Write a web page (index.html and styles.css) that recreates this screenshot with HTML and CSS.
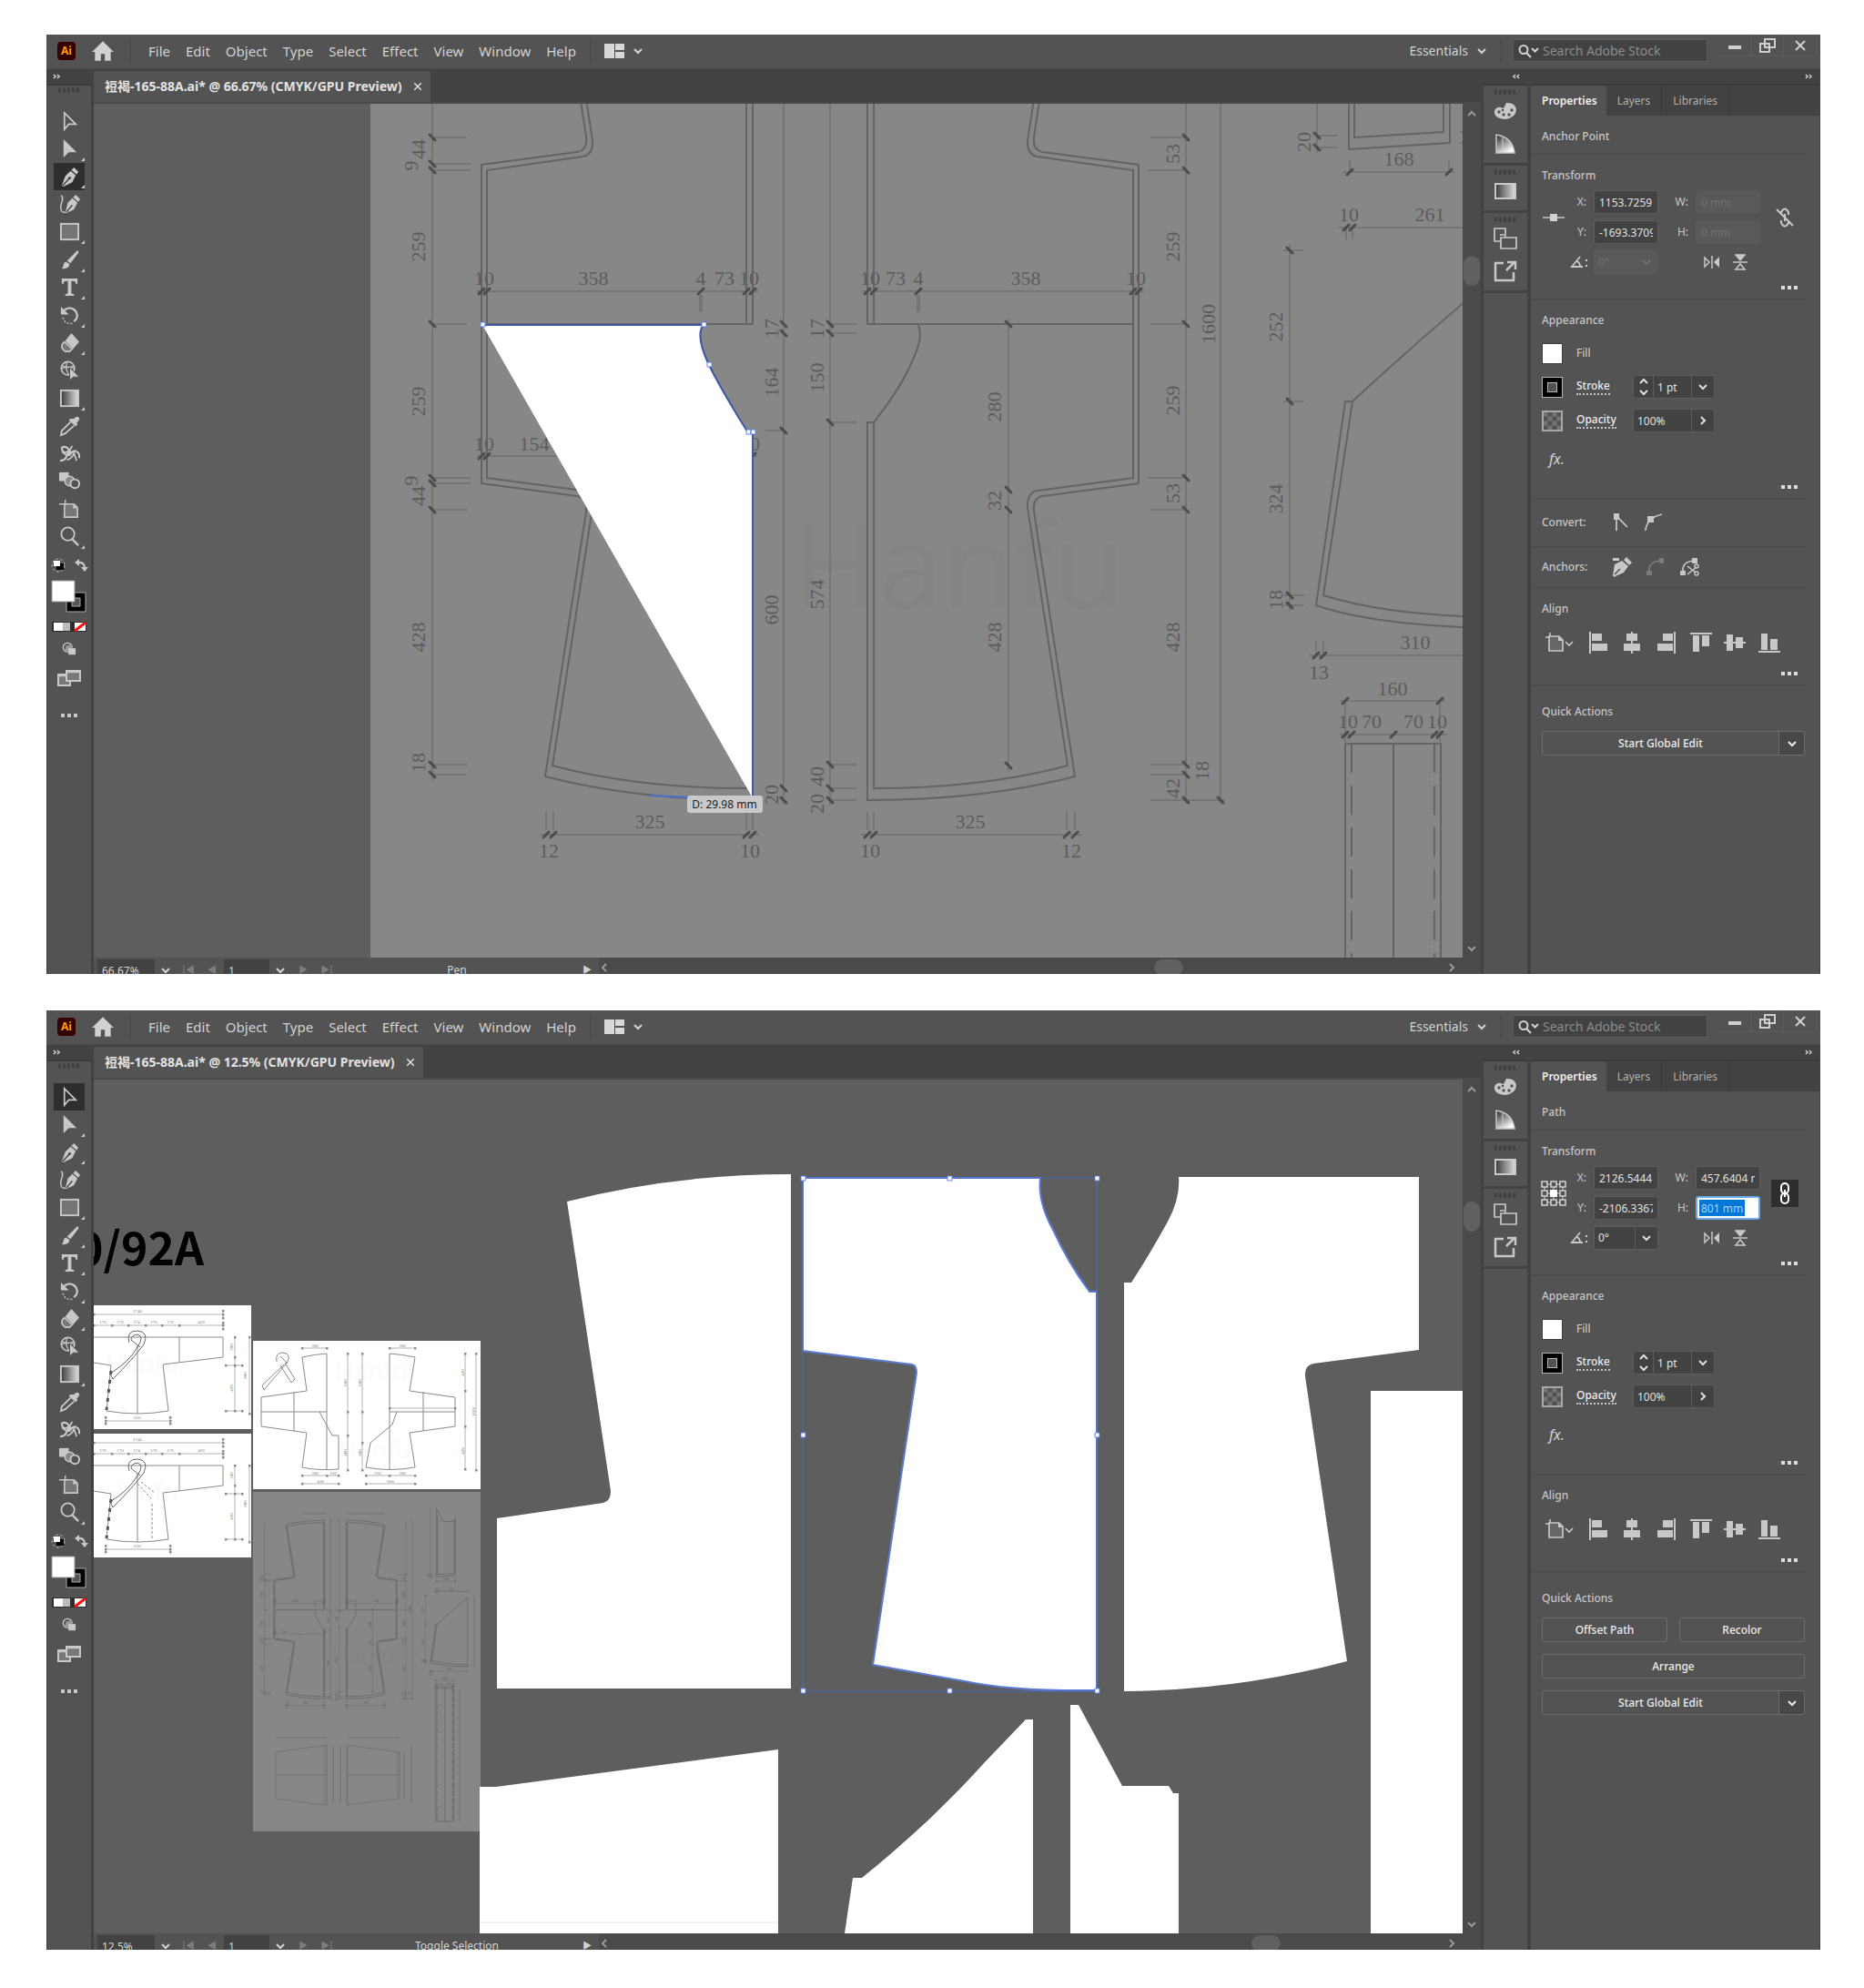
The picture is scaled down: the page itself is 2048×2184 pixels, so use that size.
FILE: index.html
```html
<!DOCTYPE html>
<html lang="en">
<head>
<meta charset="utf-8">
<title>Garment pattern drafting</title>
<link rel="stylesheet" href="styles.css">
</head>
<body>

<svg class="defs" width="0" height="0" aria-hidden="true">
  <defs>
    <linearGradient id="g-dark-light"><stop offset="0" stop-color="#3a3a3a"/><stop offset="1" stop-color="#e0e0e0"/></linearGradient>
    <linearGradient id="g-guide" x1="0" y1="0" x2="0.6" y2="1"><stop offset="0" stop-color="#222"/><stop offset="1" stop-color="#fff"/></linearGradient>
    <marker id="tick" viewBox="-8 -8 16 16" markerWidth="16" markerHeight="16" markerUnits="userSpaceOnUse" orient="auto"><path d="M-3,3 L3,-3" stroke="#4c4c4c" stroke-width="3" stroke-linecap="round"/></marker>
    <marker id="dot" viewBox="-2 -2 4 4" markerWidth="3" markerHeight="3" markerUnits="userSpaceOnUse" orient="auto"><rect x="-2" y="-2" width="4" height="4" fill="#8c8c8c"/></marker>
  </defs>

  <symbol id="i-home" viewBox="0 0 24 24"><path d="M12 2 1 13h3v9h6v-7h4v7h6v-9h3z" fill="currentColor"/></symbol>
  <symbol id="i-layout" viewBox="0 0 24 18"><path d="M1 1h11v16H1zM13 1h10v7H13zM13 10h10v7H13z" fill="currentColor"/></symbol>
  <symbol id="i-down" viewBox="0 0 12 12"><path d="m2 4 4 4 4-4" fill="none" stroke="currentColor" stroke-width="2"/></symbol>
  <symbol id="i-up" viewBox="0 0 12 12"><path d="m2 8 4-4 4 4" fill="none" stroke="currentColor" stroke-width="2"/></symbol>
  <symbol id="i-left" viewBox="0 0 12 12"><path d="m8 2-4 4 4 4" fill="none" stroke="currentColor" stroke-width="2"/></symbol>
  <symbol id="i-right" viewBox="0 0 12 12"><path d="m4 2 4 4-4 4" fill="none" stroke="currentColor" stroke-width="2"/></symbol>
  <symbol id="i-search" viewBox="0 0 24 16"><circle cx="7" cy="6.500" r="4.500" fill="none" stroke="currentColor" stroke-width="2"/><path d="m10 10 5 5M16 5l3.500 3.500L23 5" fill="none" stroke="currentColor" stroke-width="2"/></symbol>
  <symbol id="i-min" viewBox="0 0 20 16"><path d="M3 8h14v4H3z" fill="currentColor"/></symbol>
  <symbol id="i-restore" viewBox="0 0 20 16"><path d="M7 1h11v9H7zM2 6h10v9H2z" fill="none" stroke="currentColor" stroke-width="2"/></symbol>
  <symbol id="i-close" viewBox="0 0 20 16"><path d="m5 3 10 10M15 3 5 13" fill="none" stroke="currentColor" stroke-width="2"/></symbol>
  <symbol id="i-expand" viewBox="0 0 12 8"><path d="m3 2 2 2-2 2M7 2l2 2-2 2" fill="none" stroke="currentColor" stroke-width="1.700"/></symbol>
  <symbol id="i-collapse" viewBox="0 0 12 8"><path d="M5 2 3 4l2 2M9 2 7 4l2 2" fill="none" stroke="currentColor" stroke-width="1.700"/></symbol>
  <symbol id="i-grip" viewBox="0 0 26 6"><path d="M1 3h24" stroke="#404040" stroke-width="5" stroke-dasharray="3 2"/></symbol>
  <symbol id="i-dots" viewBox="0 0 20 6"><path d="M1 1h4v4H1zM8 1h4v4H8zM15 1h4v4h-4z" fill="currentColor"/></symbol>

  <symbol id="t-select" viewBox="0 0 24 24"><path d="M6 2v19l5-6h8z" fill="none" stroke="currentColor" stroke-width="1.800"/></symbol>
  <symbol id="t-direct" viewBox="0 0 24 24"><path d="M5 1v21l6-6h9z" fill="currentColor"/></symbol>
  <symbol id="t-pen" viewBox="0 0 24 24"><path d="M17 1 22 6 20 9 14 4zM13 5l6 5-4 8-10 5-2-1 4-11z" fill="currentColor"/><path d="m4 22 8-9" stroke="#444" stroke-width="1.500"/><circle cx="12" cy="13" r="1.600" fill="#444"/></symbol>
  <symbol id="t-curve" viewBox="0 0 24 24"><path d="m19 1 5 5-2 3-6-5zM15 5l6 5-4 8-9 4-1-1 3-11z" fill="currentColor"/><path d="M2 2c4 2 1 7 0 11-1 6 1 9 6 8l7-8" fill="none" stroke="currentColor" stroke-width="1.500"/><path d="m8 21 7-8" stroke="#444" stroke-width="1.500"/></symbol>
  <symbol id="t-rect" viewBox="0 0 24 24"><rect x="2" y="3" width="20" height="18" fill="#767676" stroke="currentColor" stroke-width="2"/></symbol>
  <symbol id="t-brush" viewBox="0 0 24 24"><path d="M21 1q2 1 1 3l-9 12-4-3zM8 14l4 3q-1 6-9 5 2-2 2-5 1-3 3-3z" fill="currentColor"/></symbol>
  <symbol id="t-type" viewBox="0 0 24 24"><path d="M3 2h18v6h-2q0-3-3-3h-2v13q0 2 3 2v2H7v-2q3 0 3-2V5H8Q5 5 5 8H3z" fill="currentColor"/></symbol>
  <symbol id="t-rotate" viewBox="0 0 24 24"><path d="M6 6q6-5 12 0 6 7-1 13" fill="none" stroke="currentColor" stroke-width="2.400"/><path d="M15 21q-9 2-11-8" fill="none" stroke="currentColor" stroke-width="1.500" stroke-dasharray="2 2"/><path d="M2 2v9h9z" fill="currentColor"/></symbol>
  <symbol id="t-eraser" viewBox="0 0 24 24"><path d="m14 1 9 10-7 8-9-9z" fill="currentColor"/><path d="m6 11 9 8-3 3H7q-6-4-3-9z" fill="#777" stroke="currentColor" stroke-width="1.700"/></symbol>
  <symbol id="t-shape" viewBox="0 0 24 24"><circle cx="10" cy="9" r="7.500" fill="none" stroke="currentColor" stroke-width="1.700"/><path d="M2 10q8-5 16 0M9 2q-3 8 3 15M3 6q7 4 14 0" fill="none" stroke="currentColor" stroke-width="1.300"/><path d="M12 8v15l4-4h7z" fill="currentColor" stroke="#535353"/></symbol>
  <symbol id="t-gradient" viewBox="0 0 24 24"><rect x="2" y="3" width="20" height="18" fill="url(#g-dark-light)" stroke="currentColor" stroke-width="2"/></symbol>
  <symbol id="t-dropper" viewBox="0 0 24 24"><path d="M17 3q3-4 6-1 1 3-3 6l1 2-2 2-8-7 2-2z" fill="currentColor"/><path d="M13 7 3 17l-1 5 5-2L17 11" fill="none" stroke="currentColor" stroke-width="1.800"/></symbol>
  <symbol id="t-symbol" viewBox="0 0 24 24"><path d="M1 20q6 0 8-6Q3 10 3 5q3-2 6 0 4 3 4 7 3-4 6-3 5 2 4 8" fill="none" stroke="currentColor" stroke-width="2.200"/><path d="M3 10q8 2 12-7M9 19q6-1 8-8l3 9" fill="none" stroke="currentColor" stroke-width="1.800"/><circle cx="11" cy="12" r="2.500" fill="currentColor"/></symbol>
  <symbol id="t-blend" viewBox="0 0 24 24"><path d="M0 2h11v10H0z" fill="currentColor"/><circle cx="12" cy="12" r="5.500" fill="#888" stroke="currentColor" stroke-width="1.500"/><circle cx="18" cy="15" r="5" fill="#535353" stroke="currentColor" stroke-width="2"/></symbol>
  <symbol id="t-artboard" viewBox="0 0 24 24"><path d="M7 1v5M0 6h7" stroke="currentColor" stroke-width="1.500"/><path d="M6 6h11l4 4v11H6z" fill="#777" stroke="currentColor" stroke-width="1.700"/><path d="M16 6v5h5" fill="currentColor"/></symbol>
  <symbol id="t-zoom" viewBox="0 0 24 24"><circle cx="10" cy="9" r="7.500" fill="none" stroke="currentColor" stroke-width="1.800"/><path d="m15 15 7 7" stroke="currentColor" stroke-width="2.500"/></symbol>
  <symbol id="t-default" viewBox="0 0 20 16"><circle cx="9" cy="8" r="7" fill="none" stroke="#bbb" stroke-dasharray="3 2"/><path d="M7 6h8v7H7z" fill="#000"/><path d="M4 3h7v6H4z" fill="#fff"/></symbol>
  <symbol id="t-swap" viewBox="0 0 16 16"><path d="M4 5q8-1 8 6" fill="none" stroke="currentColor" stroke-width="2.200"/><path d="M6 1v8L1 5zM8 10h8l-4 5z" fill="currentColor"/></symbol>
  <symbol id="t-draw" viewBox="0 0 18 18"><circle cx="7" cy="7" r="5.500" fill="none" stroke="currentColor" stroke-width="1.500"/><circle cx="9" cy="9" r="5" fill="#999"/><path d="M8 8h9v8H8z" fill="currentColor"/></symbol>
  <symbol id="t-screen" viewBox="0 0 26 20"><path d="M1 6h13v12H1z" fill="#777" stroke="currentColor" stroke-width="2"/><path d="M10 2h15v11H10z" fill="#777" stroke="currentColor" stroke-width="2"/><path d="M10 3h15M1 7h8" stroke="currentColor" stroke-width="2.500"/></symbol>

  <symbol id="d-palette" viewBox="0 0 26 22"><path d="M11 8 14 2q9-1 11 7 0 9-12 11Q0 19 1 11q2-5 7-4z" fill="currentColor"/><g fill="#535353"><circle cx="6" cy="12" r="1.700"/><circle cx="11" cy="15" r="1.700"/><circle cx="17" cy="15" r="1.700"/><circle cx="20" cy="10" r="1.700"/><circle cx="10" cy="10" r="1.300"/></g></symbol>
  <symbol id="d-guide" viewBox="0 0 24 22"><path d="M2 1q18 3 20 20H2z" fill="url(#g-guide)" stroke="currentColor" stroke-width="1.500"/><path d="M9 4v16" stroke="#ccc" stroke-width="1"/></symbol>
  <symbol id="d-gradient" viewBox="0 0 24 18"><path d="M1 1h22v16H1z" fill="url(#g-dark-light)" stroke="currentColor" stroke-width="2"/></symbol>
  <symbol id="d-link" viewBox="0 0 26 24"><path d="M7 15H1V1h12v6" fill="none" stroke="currentColor" stroke-width="1.700"/><path d="M8 11h17v12H8z" fill="none" stroke="currentColor" stroke-width="1.700"/><path d="M7 8h6v3" fill="none" stroke="currentColor" stroke-width="1.500"/></symbol>
  <symbol id="d-export" viewBox="0 0 26 24"><path d="M11 3H2v19h20v-9" fill="none" stroke="currentColor" stroke-width="2.500"/><path d="m14 11 9-9M15 2h9v8" fill="none" stroke="currentColor" stroke-width="2.500"/></symbol>

  <symbol id="p-anchor" viewBox="0 0 28 28"><path d="M2 14h24" stroke="#aaa" stroke-width="2"/><path d="M10 10h8v8h-8z" fill="currentColor"/></symbol>
  <symbol id="p-refpoint" viewBox="0 0 28 28"><path d="M4 4h20v20H4zM14 4v20M4 14h20" fill="none" stroke="#aaa" stroke-width="1.500"/><g fill="#535353" stroke="currentColor" stroke-width="1.500"><path d="M1 1h6v6H1zM11 1h6v6h-6zM21 1h6v6h-6zM1 11h6v6H1zM21 11h6v6h-6zM1 21h6v6H1zM11 21h6v6h-6zM21 21h6v6h-6z"/></g><path d="M10 10h8v8h-8z" fill="#fff"/></symbol>
  <symbol id="p-unlink" viewBox="0 0 24 24"><path d="M8 9V6q4-7 8 0v3M8 15v3q4 7 8 0v-3M12 8v8" fill="none" stroke="currentColor" stroke-width="2"/><path d="m3 3 18 18" stroke="currentColor" stroke-width="2"/></symbol>
  <symbol id="p-linked" viewBox="0 0 24 24"><rect x="8" y="1" width="8" height="11" rx="4" fill="none" stroke="#fff" stroke-width="2"/><rect x="8" y="12" width="8" height="11" rx="4" fill="none" stroke="#fff" stroke-width="2"/><path d="M12 8v8" stroke="#fff" stroke-width="2"/></symbol>
  <symbol id="p-angle" viewBox="0 0 20 14"><path d="M11 1 2 12h12M7 6q4 1 4 6" fill="none" stroke="currentColor" stroke-width="1.800"/><path d="M17 4h2v2h-2zM17 10h2v2h-2z" fill="currentColor"/></symbol>
  <symbol id="p-fliph" viewBox="0 0 18 14"><path d="M1 2v10l5-5zM9 0v14" fill="none" stroke="currentColor" stroke-width="1.500"/><path d="M17 1v12l-6-6z" fill="currentColor"/></symbol>
  <symbol id="p-flipv" viewBox="0 0 16 18"><path d="M2 1h12L8 8z" fill="currentColor"/><path d="M0 9h16M3 17h10l-5-6zM2 1h12" fill="none" stroke="currentColor" stroke-width="1.500"/></symbol>
  <symbol id="p-corner" viewBox="0 0 22 22"><path d="M6 4v16M6 4l12 12" stroke="currentColor" stroke-width="1.700"/><path d="M3 1h6v7H3z" fill="currentColor"/></symbol>
  <symbol id="p-smooth" viewBox="0 0 22 22"><path d="M2 20Q3 6 20 2" fill="none" stroke="currentColor" stroke-width="1.700"/><path d="M4 4h7v7H4z" fill="currentColor"/></symbol>
  <symbol id="p-remove" viewBox="0 0 24 22"><path d="M2 1h7v3H2zM17 0l6 6-3 3-6-6zM12 4l7 6-5 7-11 5-1-2 2-12z" fill="currentColor"/><path d="m4 19 6-6" stroke="#535353" stroke-width="1.500"/></symbol>
  <symbol id="p-connect" viewBox="0 0 22 22"><path d="M4 16Q3 5 16 4" fill="none" stroke="#7c7c7c" stroke-width="1.700"/><path d="M1 15h6v5H1zM15 1h5v6h-5z" fill="#7c7c7c"/></symbol>
  <symbol id="p-cut" viewBox="0 0 22 22"><path d="M4 16Q3 5 16 4" fill="none" stroke="currentColor" stroke-width="1.700"/><path d="M1 15h6v5H1zM14 1h6v6h-6z" fill="currentColor"/><path d="m9 10 9 7M9 19l10-8" stroke="currentColor" stroke-width="1.500"/><circle cx="19" cy="10" r="2" fill="none" stroke="currentColor" stroke-width="1.500"/><circle cx="19" cy="18" r="2" fill="none" stroke="currentColor" stroke-width="1.500"/></symbol>
  <symbol id="a-board" viewBox="0 0 32 24"><path d="M5 1v5M0 6h5" stroke="currentColor" stroke-width="1.500"/><path d="M4 5h11l4 4v12H4z" fill="#666" stroke="currentColor" stroke-width="1.700"/><path d="M14 5v5h5" fill="currentColor"/><path d="m22 11 4 4 4-4" fill="none" stroke="currentColor" stroke-width="1.700"/></symbol>
  <symbol id="a-left" viewBox="0 0 24 24"><path d="M2 0h2v24H2zM5 2h11v8H5zM5 13h17v8H5z" fill="currentColor"/></symbol>
  <symbol id="a-center" viewBox="0 0 24 24"><path d="M11 0h2v24h-2zM6 2h12v8H6zM3 13h18v8H3z" fill="currentColor"/></symbol>
  <symbol id="a-right" viewBox="0 0 24 24"><path d="M20 0h2v24h-2zM8 2h11v8H8zM2 13h17v8H2z" fill="currentColor"/></symbol>
  <symbol id="a-top" viewBox="0 0 24 24"><path d="M0 1h24v2H0zM3 4h7v18H3zM13 4h8v12h-8z" fill="currentColor"/></symbol>
  <symbol id="a-middle" viewBox="0 0 24 24"><path d="M0 11h24v2H0zM3 3h7v18H3zM13 6h8v12h-8z" fill="currentColor"/></symbol>
  <symbol id="a-bottom" viewBox="0 0 24 24"><path d="M0 21h24v2H0zM3 2h7v18H3zM13 8h8v12h-8z" fill="currentColor"/></symbol>
</svg>

<main class="page">

<!-- Window one: tracing a half front with the pen tool -->
<section class="window">
  <header class="menubar">
    <span class="logo">Ai</span>
    <button class="plain home" aria-label="Home"><svg width="26" height="26"><use href="#i-home"/></svg></button>
    <span class="rule"></span>
    <nav class="menus"><a href="#file">File</a><a href="#edit">Edit</a><a href="#object">Object</a><a href="#type">Type</a><a href="#select">Select</a><a href="#effect">Effect</a><a href="#view">View</a><a href="#window">Window</a><a href="#help">Help</a></nav>
    <span class="rule"></span>
    <button class="plain arrange" aria-label="Arrange documents"><svg width="24" height="18"><use href="#i-layout"/></svg><svg width="12" height="12"><use href="#i-down"/></svg></button>
    <button class="plain switcher">Essentials<svg width="12" height="12"><use href="#i-down"/></svg></button>
    <span class="rule"></span>
    <label class="stock"><svg width="24" height="16"><use href="#i-search"/></svg><input type="text" placeholder="Search Adobe Stock" aria-label="Search Adobe Stock"></label>
    <div class="winbtns"><button aria-label="Minimize"><svg width="20" height="16"><use href="#i-min"/></svg></button><button aria-label="Restore"><svg width="20" height="16"><use href="#i-restore"/></svg></button><button aria-label="Close"><svg width="20" height="16"><use href="#i-close"/></svg></button></div>
  </header>

  <div class="workspace">
    <aside class="toolbar">
      <div class="strip start"><svg width="12" height="8"><use href="#i-expand"/></svg></div>
      <div class="grip"><svg width="26" height="6"><use href="#i-grip"/></svg></div>
      <div class="tools">
        <button aria-label="Selection"><svg><use href="#t-select"/></svg></button>
        <button class="more" aria-label="Direct selection"><svg><use href="#t-direct"/></svg></button>
        <button class="more active" aria-label="Pen"><svg><use href="#t-pen"/></svg></button>
        <button aria-label="Curvature"><svg><use href="#t-curve"/></svg></button>
        <button class="more" aria-label="Rectangle"><svg><use href="#t-rect"/></svg></button>
        <button class="more" aria-label="Paintbrush"><svg><use href="#t-brush"/></svg></button>
        <button class="more" aria-label="Type"><svg><use href="#t-type"/></svg></button>
        <button class="more" aria-label="Rotate"><svg><use href="#t-rotate"/></svg></button>
        <button class="more" aria-label="Eraser"><svg><use href="#t-eraser"/></svg></button>
        <button aria-label="Shape builder"><svg><use href="#t-shape"/></svg></button>
        <button class="more" aria-label="Gradient"><svg><use href="#t-gradient"/></svg></button>
        <button aria-label="Eyedropper"><svg><use href="#t-dropper"/></svg></button>
        <button aria-label="Symbol sprayer"><svg><use href="#t-symbol"/></svg></button>
        <button aria-label="Blend"><svg><use href="#t-blend"/></svg></button>
        <button aria-label="Artboard"><svg><use href="#t-artboard"/></svg></button>
        <button class="more" aria-label="Zoom"><svg><use href="#t-zoom"/></svg></button>
      </div>
      <div class="swapper"><svg width="20" height="16"><use href="#t-default"/></svg><svg width="16" height="16"><use href="#t-swap"/></svg></div>
      <svg class="swatches" viewBox="0 0 40 60"><path d="M17 14h21v21H17z" fill="#000" stroke="#aaa"/><path d="M23 20h9v9h-9z" fill="#535353" stroke="#aaa"/><path d="M1 1h25v23H1z" fill="#fff" stroke="#999"/><path d="M1 46h38v11H1z" fill="#2d2d2d"/><path d="M3 47h10v9H3z" fill="#fff"/><path d="M13 47h8v9h-8z" fill="#bbb"/><path d="M26 47h12v9H26z" fill="#fff"/><path d="m26 56 12-9" stroke="#f11" stroke-width="3"/></svg>
      <button class="plain mode" aria-label="Drawing mode"><svg width="18" height="16"><use href="#t-draw"/></svg></button>
      <button class="plain mode" aria-label="Screen mode"><svg width="26" height="20"><use href="#t-screen"/></svg></button>
      <button class="plain edit" aria-label="Edit toolbar"><svg width="20" height="6"><use href="#i-dots"/></svg></button>
    </aside>

    <div class="document">
      <div class="tabs"><div class="tab">裋褐-165-88A.ai* @ 66.67% (CMYK/GPU Preview)<button class="plain" aria-label="Close document"><svg width="16" height="12"><use href="#i-close"/></svg></button></div></div>
      <div class="stage">
        <svg class="canvas" viewBox="103 114 1504 938">
          <rect x="407" y="114" width="1300" height="938" fill="#878787"/>
          <g stroke-width="2">
          <g id="pattern" class="pattern">
            <text class="mark" x="870" y="668">Hanfu</text>
            <g id="half">
              <path d="M827,356V-167Q700,-167 599,-141L644,150Q646,165 634,167L529,181V531L634,545Q646,547 644,562L599,853Q700,879 827,879V474"/>
              <path d="M820,356V-154Q700,-154 607,-129L651,154Q652,170 640,172L535,187V525L640,539Q652,541 651,558L607,841Q700,866 820,866V474"/>
              <path d="M535,356H827"/>
            </g>
            <use href="#half" transform="translate(1780) scale(-1 1)"/>
            <path d="M773,356C767,364 768,378 779,401C790,424 805,448 820,474H827M1009,356C1013,370 1010,380 1003,395C992,422 975,445 960,464H953V476M960,464V476"/>
            <path d="M1482,-238V164L1593,157V-180M1488,-200V151L1586,145V-180M1482,-238L1520,-160H1593"/>
            <path d="M1478,441L1446,665Q1520,690 1665,690V285Q1570,363 1486,441ZM1486,441L1454,654Q1530,678 1660,678"/>
            <path d="M1478,1597V817H1583V1597ZM1531,817V1597"/>
            <path d="M1485,817V1597M1576,817V1597" stroke-dasharray="32 14"/>
            <g class="ext">
              <path d="M475,151H513M475,180H517M475,187H517M475,356H513M475,525H517M475,531H517M475,560H513M475,840H513M475,851H513"/>
              <path d="M841,473H861M912,356H941M912,366H941M912,464H941M912,840H941M912,866H941M912,879H941"/>
              <path d="M1264,151H1303M1261,187H1303M1264,356H1303M1261,525H1303M1264,560H1303M1264,840H1303M1264,851H1303M1264,879H1346"/>
              <path d="M600,892V912M608,892V912M820,892V912M827,892V912M953,892V912M960,892V912M1172,892V912M1181,892V912"/>
              <path d="M769,324V343M771,324V343M1008,324V343M1010,324V343M1447,149H1470M1447,162H1470M1410,275H1433M1410,441H1433M1410,654H1433M1410,665H1433M1604,145H1607M1604,157H1607M1479,250V263M1486,250V263M1446,704V720M1454,704V720M1478,770V817M1582,770V817M1483,176V189M1592,176V189"/>
            </g>
            <g class="dimline">
              <path d="M475,-150V-141V151V180V187V356V525V531V560V840V851V858"/>
              <path d="M861,-180V-167V356V366V473V866V879V884"/>
              <path d="M912,-180V-167V356V366V464V840V866V879V884"/>
              <path d="M1108,350V356V538V560V841V847"/>
              <path d="M1303,-150V-141V151V187V356V525V560V840V851V879V883"/>
              <path d="M1341,-170V-167V879V883"/>
              <path d="M524,320H529H535H770H820H827H833"/>
              <path d="M524,501H529H535H680H820H827H833"/>
              <path d="M946,320H953H960H1009H1245H1251H1258"/>
              <path d="M593,917H600H608H820H827H834"/>
              <path d="M946,917H953H960H1172H1181H1188"/>
              <path d="M1447,-240V149V162V168"/>
              <path d="M1417,269V275V441V654V665V671"/>
              <path d="M1476,189H1483H1592H1598"/>
              <path d="M1471,250H1479H1486H1660H1670"/>
              <path d="M1439,720H1446H1454H1665H1670"/>
              <path d="M1472,770H1478H1582H1588"/>
              <path d="M1472,807H1478H1485H1531H1576H1582H1590"/>
            </g>
            <g class="dim">
              <text x="532" y="313">10</text><text x="652" y="313">358</text><text x="770" y="313">4</text><text x="796" y="313">73</text><text x="823" y="313">10</text>
              <text x="532" y="495">10</text><text x="587" y="495">154</text><text x="824" y="495">10</text>
              <text x="956" y="313">10</text><text x="984" y="313">73</text><text x="1009" y="313">4</text><text x="1127" y="313">358</text><text x="1248" y="313">10</text>
              <text x="714" y="910">325</text><text x="603" y="942">12</text><text x="824" y="942">10</text><text x="1066" y="910">325</text><text x="956" y="942">10</text><text x="1177" y="942">12</text>
              <text x="1537" y="182">168</text><text x="1482" y="243">10</text><text x="1571" y="243">261</text><text x="1555" y="713">310</text><text x="1449" y="746">13</text><text x="1530" y="764">160</text>
              <text x="1481" y="800">10</text><text x="1507" y="800">70</text><text x="1553" y="800">70</text><text x="1579" y="800">10</text>
              <text transform="translate(467,164) rotate(-90)">44</text><text transform="translate(459,182) rotate(-90)">9</text><text transform="translate(467,271) rotate(-90)">259</text><text transform="translate(467,441) rotate(-90)">259</text><text transform="translate(459,528) rotate(-90)">9</text><text transform="translate(467,545) rotate(-90)">44</text><text transform="translate(467,700) rotate(-90)">428</text><text transform="translate(467,838) rotate(-90)">18</text>
              <text transform="translate(855,361) rotate(-90)">17</text><text transform="translate(855,420) rotate(-90)">164</text><text transform="translate(855,670) rotate(-90)">600</text><text transform="translate(855,873) rotate(-90)">20</text>
              <text transform="translate(905,361) rotate(-90)">17</text><text transform="translate(905,415) rotate(-90)">150</text><text transform="translate(905,653) rotate(-90)">574</text><text transform="translate(905,853) rotate(-90)">40</text><text transform="translate(905,883) rotate(-90)">20</text>
              <text transform="translate(1100,447) rotate(-90)">280</text><text transform="translate(1100,550) rotate(-90)">32</text><text transform="translate(1100,700) rotate(-90)">428</text>
              <text transform="translate(1296,169) rotate(-90)">53</text><text transform="translate(1296,271) rotate(-90)">259</text><text transform="translate(1296,440) rotate(-90)">259</text><text transform="translate(1296,542) rotate(-90)">53</text><text transform="translate(1296,700) rotate(-90)">428</text><text transform="translate(1328,847) rotate(-90)">18</text><text transform="translate(1296,866) rotate(-90)">42</text><text transform="translate(1335,356) rotate(-90)">1600</text>
              <text transform="translate(1440,156) rotate(-90)">20</text><text transform="translate(1409,359) rotate(-90)">252</text><text transform="translate(1409,548) rotate(-90)">324</text><text transform="translate(1409,659) rotate(-90)">18</text>
            </g>
          </g>
          </g>
          <path d="M530,357H773C767,364 768,378 779,401C790,424 805,448 821,474H827V877Z" fill="#fff"/>
          <path d="M530,357H773C767,364 768,378 779,401C790,424 805,448 821,474H827V877" fill="none" stroke="#3d5ba9" stroke-width="2"/>
          <path d="M714,874L826,879" stroke="#4a6fd0" stroke-width="2"/>
          <g class="handles"><path d="M528,354h5v5h-5zM771,354h5v5h-5zM777,398h5v5h-5zM820,472h5v5h-5zM825,472h5v5h-5z"/></g>
          <rect x="755" y="874" width="83" height="19" rx="3" fill="#c9c9c9"/>
          <text class="tip" x="796" y="888">D: 29.98 mm</text>
        </svg>
        <div class="vscroll"><svg width="12" height="12"><use href="#i-up"/></svg><span class="thumb low"></span><svg width="12" height="12"><use href="#i-down"/></svg></div>
      </div>
      <footer class="status">
        <select class="zoomlevel" aria-label="Zoom level"><option>66.67%</option></select><svg class="chev" width="12" height="12"><use href="#i-down"/></svg>
        <span class="nav">I◀</span><span class="nav">◀</span>
        <select class="pageno" aria-label="Artboard number"><option>1</option></select><svg class="chev" width="12" height="12"><use href="#i-down"/></svg>
        <span class="nav">▶</span><span class="nav">▶I</span>
        <span class="hint">Pen</span><span class="play">▶</span>
        <div class="hscroll"><svg width="12" height="12"><use href="#i-left"/></svg><span class="thumb near"></span><svg width="12" height="12"><use href="#i-right"/></svg></div>
      </footer>
    </div>

    <aside class="dock">
      <div class="strip end"><svg width="12" height="8"><use href="#i-collapse"/></svg></div>
      <div class="dockgroup"><svg width="26" height="6"><use href="#i-grip"/></svg><button class="plain" aria-label="Color"><svg width="26" height="22"><use href="#d-palette"/></svg></button><button class="plain" aria-label="Color guide"><svg width="24" height="22"><use href="#d-guide"/></svg></button></div>
      <div class="dockgroup"><svg width="26" height="6"><use href="#i-grip"/></svg><button class="plain" aria-label="Gradient"><svg width="24" height="18"><use href="#d-gradient"/></svg></button></div>
      <div class="dockgroup"><svg width="26" height="6"><use href="#i-grip"/></svg><button class="plain" aria-label="Links"><svg width="26" height="24"><use href="#d-link"/></svg></button><button class="plain" aria-label="Asset export"><svg width="26" height="24"><use href="#d-export"/></svg></button></div>
    </aside>

    <aside class="panel">
      <div class="strip end"><svg width="12" height="8"><use href="#i-expand"/></svg></div>
      <div class="ptabs"><button class="on">Properties</button><button>Layers</button><button>Libraries</button></div>
      <div class="pbody">
        <div class="kind">Anchor Point</div>
        <section class="block">
          <h2>Transform</h2>
          <div class="xform">
            <svg class="ref" width="28" height="28"><use href="#p-anchor"/></svg>
            <label for="a-x">X:</label><input id="a-x" type="text" value="1153.7259"><label for="a-w">W:</label><input id="a-w" type="text" value="0 mm" disabled>
            <label for="a-y">Y:</label><input id="a-y" type="text" value="-1693.3709"><label for="a-h">H:</label><input id="a-h" type="text" value="0 mm" disabled>
            <button class="plain lock" aria-label="Constrain proportions"><svg width="24" height="24"><use href="#p-unlink"/></svg></button>
            <svg class="ang" width="20" height="14"><use href="#p-angle"/></svg>
            <div class="combo angle off"><select aria-label="Rotate" disabled><option>0°</option></select><svg width="12" height="12"><use href="#i-down"/></svg></div>
            <div class="flips"><svg width="18" height="14"><use href="#p-fliph"/></svg><svg width="16" height="18"><use href="#p-flipv"/></svg></div>
          </div>
          <button class="plain dots" aria-label="More options"><svg width="20" height="6"><use href="#i-dots"/></svg></button>
        </section>
        <section class="block">
          <h2>Appearance</h2>
          <div class="looks">
            <span class="chip fill"></span><span>Fill</span>
            <span class="chip stroke"></span><a href="#stroke">Stroke</a>
            <div class="combo weight"><span class="spin"><svg width="12" height="12"><use href="#i-up"/></svg><svg width="12" height="12"><use href="#i-down"/></svg></span><input type="text" value="1 pt" aria-label="Stroke weight"><svg width="12" height="12"><use href="#i-down"/></svg></div>
            <span class="chip opacity"></span><a href="#opacity">Opacity</a>
            <div class="combo amount"><input type="text" value="100%" aria-label="Opacity"><svg width="12" height="12"><use href="#i-right"/></svg></div>
          </div>
          <button class="plain fx">fx.</button>
          <button class="plain dots" aria-label="More options"><svg width="20" height="6"><use href="#i-dots"/></svg></button>
        </section>
        <div class="line convert"><span>Convert:</span><svg width="22" height="22"><use href="#p-corner"/></svg><svg width="22" height="22"><use href="#p-smooth"/></svg></div>
        <div class="line"><span>Anchors:</span><svg width="24" height="22"><use href="#p-remove"/></svg><svg width="22" height="22"><use href="#p-connect"/></svg><svg width="24" height="22"><use href="#p-cut"/></svg></div>
        <section class="block">
          <h2>Align</h2>
          <div class="aligns"><svg width="32" height="24"><use href="#a-board"/></svg><svg width="24" height="24"><use href="#a-left"/></svg><svg width="24" height="24"><use href="#a-center"/></svg><svg width="24" height="24"><use href="#a-right"/></svg><svg width="24" height="24"><use href="#a-top"/></svg><svg width="24" height="24"><use href="#a-middle"/></svg><svg width="24" height="24"><use href="#a-bottom"/></svg></div>
          <button class="plain dots" aria-label="More options"><svg width="20" height="6"><use href="#i-dots"/></svg></button>
        </section>
        <section class="quick">
          <h2>Quick Actions</h2>
          <div class="actions"><div class="split"><button>Start Global Edit</button><button aria-label="Global edit options"><svg width="12" height="12"><use href="#i-down"/></svg></button></div></div>
        </section>
      </div>
    </aside>
  </div>
</section>

<!-- Window two: resizing the finished piece -->
<section class="window">
  <header class="menubar">
    <span class="logo">Ai</span>
    <button class="plain home" aria-label="Home"><svg width="26" height="26"><use href="#i-home"/></svg></button>
    <span class="rule"></span>
    <nav class="menus"><a href="#file">File</a><a href="#edit">Edit</a><a href="#object">Object</a><a href="#type">Type</a><a href="#select">Select</a><a href="#effect">Effect</a><a href="#view">View</a><a href="#window">Window</a><a href="#help">Help</a></nav>
    <span class="rule"></span>
    <button class="plain arrange" aria-label="Arrange documents"><svg width="24" height="18"><use href="#i-layout"/></svg><svg width="12" height="12"><use href="#i-down"/></svg></button>
    <button class="plain switcher">Essentials<svg width="12" height="12"><use href="#i-down"/></svg></button>
    <span class="rule"></span>
    <label class="stock"><svg width="24" height="16"><use href="#i-search"/></svg><input type="text" placeholder="Search Adobe Stock" aria-label="Search Adobe Stock"></label>
    <div class="winbtns"><button aria-label="Minimize"><svg width="20" height="16"><use href="#i-min"/></svg></button><button aria-label="Restore"><svg width="20" height="16"><use href="#i-restore"/></svg></button><button aria-label="Close"><svg width="20" height="16"><use href="#i-close"/></svg></button></div>
  </header>

  <div class="workspace">
    <aside class="toolbar">
      <div class="strip start"><svg width="12" height="8"><use href="#i-expand"/></svg></div>
      <div class="grip"><svg width="26" height="6"><use href="#i-grip"/></svg></div>
      <div class="tools">
        <button class="active" aria-label="Selection"><svg><use href="#t-select"/></svg></button>
        <button class="more" aria-label="Direct selection"><svg><use href="#t-direct"/></svg></button>
        <button class="more" aria-label="Pen"><svg><use href="#t-pen"/></svg></button>
        <button aria-label="Curvature"><svg><use href="#t-curve"/></svg></button>
        <button class="more" aria-label="Rectangle"><svg><use href="#t-rect"/></svg></button>
        <button class="more" aria-label="Paintbrush"><svg><use href="#t-brush"/></svg></button>
        <button class="more" aria-label="Type"><svg><use href="#t-type"/></svg></button>
        <button class="more" aria-label="Rotate"><svg><use href="#t-rotate"/></svg></button>
        <button class="more" aria-label="Eraser"><svg><use href="#t-eraser"/></svg></button>
        <button aria-label="Shape builder"><svg><use href="#t-shape"/></svg></button>
        <button class="more" aria-label="Gradient"><svg><use href="#t-gradient"/></svg></button>
        <button aria-label="Eyedropper"><svg><use href="#t-dropper"/></svg></button>
        <button aria-label="Symbol sprayer"><svg><use href="#t-symbol"/></svg></button>
        <button aria-label="Blend"><svg><use href="#t-blend"/></svg></button>
        <button aria-label="Artboard"><svg><use href="#t-artboard"/></svg></button>
        <button class="more" aria-label="Zoom"><svg><use href="#t-zoom"/></svg></button>
      </div>
      <div class="swapper"><svg width="20" height="16"><use href="#t-default"/></svg><svg width="16" height="16"><use href="#t-swap"/></svg></div>
      <svg class="swatches" viewBox="0 0 40 60"><path d="M17 14h21v21H17z" fill="#000" stroke="#aaa"/><path d="M23 20h9v9h-9z" fill="#535353" stroke="#aaa"/><path d="M1 1h25v23H1z" fill="#fff" stroke="#999"/><path d="M1 46h38v11H1z" fill="#2d2d2d"/><path d="M3 47h10v9H3z" fill="#fff"/><path d="M13 47h8v9h-8z" fill="#bbb"/><path d="M26 47h12v9H26z" fill="#fff"/><path d="m26 56 12-9" stroke="#f11" stroke-width="3"/></svg>
      <button class="plain mode" aria-label="Drawing mode"><svg width="18" height="16"><use href="#t-draw"/></svg></button>
      <button class="plain mode" aria-label="Screen mode"><svg width="26" height="20"><use href="#t-screen"/></svg></button>
      <button class="plain edit" aria-label="Edit toolbar"><svg width="20" height="6"><use href="#i-dots"/></svg></button>
    </aside>

    <div class="document">
      <div class="tabs"><div class="tab">裋褐-165-88A.ai* @ 12.5% (CMYK/GPU Preview)<button class="plain" aria-label="Close document"><svg width="16" height="12"><use href="#i-close"/></svg></button></div></div>
      <div class="stage">
        <svg class="canvas" viewBox="103 1186 1504 938">
          <text class="size" x="224" y="1390">0/92A</text>
          <path d="M100,1434H276V1570H100ZM100,1575H276V1711H100ZM278,1473H528V1636H278Z" fill="#fff"/>
          <path d="M278,1639H528V2012H278Z" fill="#878787"/>
          <g id="robe" class="mini">
            <text class="ghost" x="116" y="1508">Hanfu</text>
            <path d="M103,1469H245V1491L179,1499L185,1550Q151,1556 117,1550L122,1500L103,1497M151,1478V1553M197,1469V1497"/>
            <path d="M142,1475Q138,1462 151,1462Q164,1463 158,1477Q146,1493 124,1515L121,1509Q142,1496 151,1480Q159,1468 151,1466Q144,1467 144,1472L154,1480" stroke="#666"/>
            <path class="knots" d="M122,1506L117,1549" stroke-dasharray="4 6"/>
            <path class="ticks" d="M103,1444H245M103,1456H123H141H160H178H197H245M116,1561H187M258,1469V1491V1500V1550M274,1469V1553M116,1557V1564M187,1557V1564M245,1440V1448M245,1453V1460M248,1500H266M248,1550H266"/>
            <g class="tiny"><text x="151" y="1442">1740</text><text x="113" y="1454">170</text><text x="132" y="1454">170</text><text x="150" y="1454">174</text><text x="169" y="1454">170</text><text x="187" y="1454">170</text><text x="221" y="1454">430</text><text x="151" y="1559">650</text><text transform="translate(256,1480) rotate(-90)">280</text><text transform="translate(256,1525) rotate(-90)">428</text><text transform="translate(271,1511) rotate(-90)">800</text></g>
          </g>
          <use href="#robe" y="141"/>
          <path class="mini" d="M151,1630L166,1646M155,1628L170,1640M167,1652V1692" fill="none" stroke-dasharray="3 2"/>
          <g class="mini">
            <text class="ghost" x="368" y="1516">Hanfu</text><text class="ghost" x="372" y="1602">Hanfu</text>
            <path d="M359,1551V1487Q345,1488 332,1491L337,1528L287,1535V1567L337,1574L332,1612Q350,1616 372,1614V1577H365L351,1551M287,1551H359M323,1529V1572M359,1551V1615"/>
            <path d="M428,1551V1487Q442,1488 456,1491L450,1528L500,1535V1567L450,1574L456,1612Q428,1617 402,1612L407,1585L431,1565L436,1551M428,1551H500M465,1529V1572M428,1551V1615"/>
            <path d="M304,1496Q302,1486 311,1486Q320,1487 316,1496Q306,1508 290,1527L288,1522L312,1499M308,1500L320,1519L324,1515L313,1497M308,1490L316,1498"/>
            <path class="ticks" d="M332,1481H359M428,1481H456M382,1487V1551V1577V1615M398,1487V1551V1585V1615M511,1487V1528V1567V1614M523,1487V1615M332,1621H359H372M332,1630H372M402,1621H428H456M402,1630H456M428,1547H500"/>
            <g class="tiny"><text x="346" y="1480">300</text><text x="442" y="1480">300</text><text x="346" y="1620">300</text><text x="366" y="1620">100</text><text x="352" y="1629">430</text><text x="415" y="1620">250</text><text x="442" y="1620">300</text><text x="429" y="1629">600</text><text transform="translate(381,1519) rotate(-90)">600</text><text transform="translate(397,1519) rotate(-90)">600</text><text transform="translate(381,1596) rotate(-90)">400</text><text transform="translate(397,1596) rotate(-90)">300</text><text transform="translate(510,1508) rotate(-90)">428</text><text transform="translate(510,1594) rotate(-90)">428</text><text transform="translate(522,1551) rotate(-90)">1600</text></g>
          </g>
          <g class="small">
            <use href="#pattern" transform="translate(201.700 1701.500) scale(.1875)" stroke-width="4"/>
            <path d="M303,1925L359,1917V1983L303,1976ZM439,1925L381,1917V1983L439,1976ZM303,1950H359M381,1950H439M357,1917V1983M437,1925V1976M382,1917V1983M303,1909H359M381,1909H439M366,1917V1983M374,1917V1983M444,1925V1976M452,1917V1983M505,1856V2001M332,1663H359M381,1663H423M481,1748H515M521,1754V1832"/>
          </g>
          <g class="pieces">
            <path d="M869,1290Q740,1290 623,1320L671,1638Q671,1649 663,1651L546,1668V1855H869Z"/>
            <path d="M1295,1293H1559V1483L1443,1498Q1433,1500 1434,1512L1480,1825Q1360,1857 1235,1858V1409H1243Q1262,1380 1283,1342Q1297,1316 1295,1293Z"/>
            <path d="M1506,1528H1607V2124H1506ZM527,1963H545L855,1922V2124H527Z"/>
            <path d="M1127,1889H1135V2124H928L937,2063H947C990,2028 1031,1992 1081,1937ZM1176,1873H1185L1233,1962H1284L1289,1970H1295V2124H1176Z"/>
            <path d="M882,1294H1143Q1140,1320 1157,1351Q1174,1388 1197,1419H1205V1857Q1110,1858 1060,1847L959,1829L1007,1508Q1007,1500 1002,1499L882,1484Z" stroke="#5b7bd5" stroke-width="2"/>
          </g>
          <path d="M527,2112H855" stroke="#e4e4e4"/>
          <path d="M882,1294H1205V1858H882Z" fill="none" stroke="#4a6bc4"/>
          <g class="handles"><path d="M880,1292h5v5h-5zM1041,1292h5v5h-5zM1203,1292h5v5h-5zM880,1574h5v5h-5zM1203,1574h5v5h-5zM880,1855h5v5h-5zM1041,1855h5v5h-5zM1203,1855h5v5h-5z"/></g>
        </svg>
        <div class="vscroll"><svg width="12" height="12"><use href="#i-up"/></svg><span class="thumb"></span><svg width="12" height="12"><use href="#i-down"/></svg></div>
      </div>
      <footer class="status">
        <select class="zoomlevel" aria-label="Zoom level"><option>12.5%</option></select><svg class="chev" width="12" height="12"><use href="#i-down"/></svg>
        <span class="nav">I◀</span><span class="nav">◀</span>
        <select class="pageno" aria-label="Artboard number"><option>1</option></select><svg class="chev" width="12" height="12"><use href="#i-down"/></svg>
        <span class="nav">▶</span><span class="nav">▶I</span>
        <span class="hint">Toggle Selection</span><span class="play">▶</span>
        <div class="hscroll"><svg width="12" height="12"><use href="#i-left"/></svg><span class="thumb far"></span><svg width="12" height="12"><use href="#i-right"/></svg></div>
      </footer>
    </div>

    <aside class="dock">
      <div class="strip end"><svg width="12" height="8"><use href="#i-collapse"/></svg></div>
      <div class="dockgroup"><svg width="26" height="6"><use href="#i-grip"/></svg><button class="plain" aria-label="Color"><svg width="26" height="22"><use href="#d-palette"/></svg></button><button class="plain" aria-label="Color guide"><svg width="24" height="22"><use href="#d-guide"/></svg></button></div>
      <div class="dockgroup"><svg width="26" height="6"><use href="#i-grip"/></svg><button class="plain" aria-label="Gradient"><svg width="24" height="18"><use href="#d-gradient"/></svg></button></div>
      <div class="dockgroup"><svg width="26" height="6"><use href="#i-grip"/></svg><button class="plain" aria-label="Links"><svg width="26" height="24"><use href="#d-link"/></svg></button><button class="plain" aria-label="Asset export"><svg width="26" height="24"><use href="#d-export"/></svg></button></div>
    </aside>

    <aside class="panel">
      <div class="strip end"><svg width="12" height="8"><use href="#i-expand"/></svg></div>
      <div class="ptabs"><button class="on">Properties</button><button>Layers</button><button>Libraries</button></div>
      <div class="pbody">
        <div class="kind">Path</div>
        <section class="block">
          <h2>Transform</h2>
          <div class="xform">
            <svg class="ref" width="28" height="28"><use href="#p-refpoint"/></svg>
            <label for="b-x">X:</label><input id="b-x" type="text" value="2126.5444"><label for="b-w">W:</label><input id="b-w" type="text" value="457.6404 mm">
            <label for="b-y">Y:</label><input id="b-y" type="text" value="-2106.3367"><label for="b-h">H:</label><input id="b-h" class="editing" type="text" value="801 mm">
            <button class="plain lock on" aria-label="Constrain proportions"><svg width="24" height="24"><use href="#p-linked"/></svg></button>
            <svg class="ang" width="20" height="14"><use href="#p-angle"/></svg>
            <div class="combo angle"><select aria-label="Rotate"><option>0°</option></select><svg width="12" height="12"><use href="#i-down"/></svg></div>
            <div class="flips"><svg width="18" height="14"><use href="#p-fliph"/></svg><svg width="16" height="18"><use href="#p-flipv"/></svg></div>
          </div>
          <button class="plain dots" aria-label="More options"><svg width="20" height="6"><use href="#i-dots"/></svg></button>
        </section>
        <section class="block">
          <h2>Appearance</h2>
          <div class="looks">
            <span class="chip fill"></span><span>Fill</span>
            <span class="chip stroke"></span><a href="#stroke">Stroke</a>
            <div class="combo weight"><span class="spin"><svg width="12" height="12"><use href="#i-up"/></svg><svg width="12" height="12"><use href="#i-down"/></svg></span><input type="text" value="1 pt" aria-label="Stroke weight"><svg width="12" height="12"><use href="#i-down"/></svg></div>
            <span class="chip opacity"></span><a href="#opacity">Opacity</a>
            <div class="combo amount"><input type="text" value="100%" aria-label="Opacity"><svg width="12" height="12"><use href="#i-right"/></svg></div>
          </div>
          <button class="plain fx">fx.</button>
          <button class="plain dots" aria-label="More options"><svg width="20" height="6"><use href="#i-dots"/></svg></button>
        </section>
        <section class="block">
          <h2>Align</h2>
          <div class="aligns"><svg width="32" height="24"><use href="#a-board"/></svg><svg width="24" height="24"><use href="#a-left"/></svg><svg width="24" height="24"><use href="#a-center"/></svg><svg width="24" height="24"><use href="#a-right"/></svg><svg width="24" height="24"><use href="#a-top"/></svg><svg width="24" height="24"><use href="#a-middle"/></svg><svg width="24" height="24"><use href="#a-bottom"/></svg></div>
          <button class="plain dots" aria-label="More options"><svg width="20" height="6"><use href="#i-dots"/></svg></button>
        </section>
        <section class="quick">
          <h2>Quick Actions</h2>
          <div class="actions"><div class="pair"><button>Offset Path</button><button>Recolor</button></div><button>Arrange</button><div class="split"><button>Start Global Edit</button><button aria-label="Global edit options"><svg width="12" height="12"><use href="#i-down"/></svg></button></div></div>
        </section>
      </div>
    </aside>
  </div>
</section>
</main>
</body>
</html>
```

FILE: styles.css
```css
* { box-sizing: border-box; }

body {
  margin: 0;
  background: #fff;
  color: #d2d2d2;
  font: 12px/20px "Noto Sans", "Noto Sans CJK SC", sans-serif;
}

svg { display: block; flex: none; }
.defs { position: absolute; }

button, input, select {
  font: inherit;
  color: inherit;
  margin: 0;
  padding: 0;
  border: 0;
  border-radius: 0;
  background: none;
  appearance: none;
  min-width: 0;
}

a { color: inherit; text-decoration: none; }
h2 { margin: 0; font-size: 12px; font-weight: 500; line-height: 20px; color: #c6c6c6; }
.plain { display: flex; align-items: center; justify-content: center; }

.page {
  display: flex;
  flex-direction: column;
  gap: 40px;
  padding: 38px 48px 42px 51px;
}

.window { background: #424242; overflow: hidden; }

/* menu bar */
.menubar {
  display: flex;
  align-items: center;
  height: 38px;
  padding: 0 0 2px 12px;
  background: #535353;
  font-size: 15px;
  border-bottom: 1px solid #484848;
}
.logo {
  width: 20px;
  height: 20px;
  border-radius: 4px;
  background: #330000;
  color: #ff9a00;
  font-size: 12px;
  font-weight: 700;
  text-align: center;
}
.home { width: 60px; color: #d0d0d0; }
.rule { width: 1px; height: 26px; background: #484848; }
.menus { display: flex; gap: 17px; padding: 0 15px 0 19px; }
.arrange { gap: 8px; padding-left: 14px; color: #d8d8d8; }
.switcher { gap: 9px; margin-left: auto; padding-right: 15px; font-size: 14px; }
.stock {
  display: flex;
  align-items: center;
  width: 214px;
  height: 25px;
  margin-left: 12px;
  padding-left: 4px;
  gap: 4px;
  border: 1px solid #5d5d5d;
  background: #424242;
}
.stock input { flex: 1; font-size: 14px; }
.stock input::placeholder { color: #8c8c8c; opacity: 1; }
.winbtns { display: flex; align-self: flex-start; margin: 0 4px 0 12px; }
.winbtns button {
  display: flex;
  align-items: center;
  justify-content: center;
  width: 36px;
  height: 24px;
  border: 1px solid #5b5b5b;
  border-top: 0;
  border-left: 0;
  color: #cfcfcf;
}

/* columns under the menu bar */
.workspace { display: grid; grid-template-columns: 52px minmax(0, 1fr) 55px 318px; }
.strip { display: flex; align-items: center; height: 18px; background: #424242; color: #c4c4c4; border-bottom: 2px solid #3a3a3a; }
.strip.start { padding-left: 4px; }
.strip.end { justify-content: flex-end; padding-right: 6px; }

/* tools */
.toolbar {
  display: flex;
  flex-direction: column;
  align-items: center;
  background: #535353;
  border-left: 1px solid #3e3e3e;
  border-right: 3px solid #424242;
}
.toolbar .strip { align-self: stretch; }
.grip { height: 24px; padding-top: 2px; }
.tools { display: grid; grid-template-rows: repeat(16, 1fr); height: 487px; }
.tools button {
  position: relative;
  display: flex;
  align-items: center;
  justify-content: center;
  width: 34px;
  color: #c8c8c8;
}
.tools svg { width: 23px; height: 23px; }
.tools .active { background: #2e2e2e; }
.tools .more::after {
  content: "";
  position: absolute;
  right: 0;
  bottom: 2px;
  border: 2px solid #c8c8c8;
  border-top-color: transparent;
  border-left-color: transparent;
}
.swapper { display: flex; justify-content: space-between; width: 42px; margin-top: 8px; color: #c8c8c8; }
.swatches { width: 40px; height: 60px; margin-top: 8px; }
.mode { height: 32px; color: #c8c8c8; }
.edit { height: 44px; padding-top: 6px; color: #c8c8c8; }

/* document area */
.document { display: grid; grid-template-rows: 38px 1fr 18px; min-width: 0; }
.tabs { display: flex; border-bottom: 2px solid #4a4a4a; padding-top: 2px; }
.tab {
  display: flex;
  align-items: center;
  gap: 10px;
  padding: 0 6px 0 12px;
  background: #535353;
  color: #e2e2e2;
  font-size: 14px;
  font-weight: 700;
}
.stage { display: flex; background: #5e5e5e; }
.canvas { flex: 1; min-width: 0; height: auto; overflow: hidden; }
.vscroll {
  position: relative;
  display: flex;
  flex-direction: column;
  justify-content: space-between;
  align-items: center;
  width: 20px;
  padding: 5px 0 4px;
  background: #4a4a4a;
  color: #9a9a9a;
}
.thumb { position: absolute; background: #606060; border-radius: 9px; }
.vscroll .thumb { left: 1px; top: 134px; width: 18px; height: 33px; }
.vscroll .thumb.low { top: 167px; }

/* status bar, cut by the window's lower edge */
.status {
  display: flex;
  align-items: flex-start;
  height: 18px;
  overflow: hidden;
  background: #535353;
  line-height: 30px;
  padding-left: 4px;
}
.status select { height: 26px; margin-top: 2px; background: #424242; line-height: 26px; }
.zoomlevel { width: 63px; padding: 0 5px; }
.pageno { width: 50px; padding: 0 5px; }
.chev { width: 24px; height: 16px; margin-top: 6px; padding: 0 6px; }
.nav { width: 26px; font-size: 10px; line-height: 26px; text-align: center; color: #7e7e7e; }
.hint { width: 260px; line-height: 28px; text-align: center; }
.play { width: 26px; font-size: 10px; line-height: 26px; text-align: center; }
.hscroll {
  position: relative;
  flex: 1;
  display: flex;
  justify-content: space-between;
  height: 18px;
  padding: 5px 26px 0 0;
  background: #4a4a4a;
  color: #9a9a9a;
}
.hscroll .thumb { width: 32px; height: 18px; top: 2px; }
.hscroll .near { left: 63%; }
.hscroll .far { left: 74%; }

/* collapsed panel dock */
.dock { background: #535353; border-left: 3px solid #424242; border-right: 4px solid #424242; }
.dockgroup {
  display: flex;
  flex-direction: column;
  align-items: center;
  padding: 4px 0 3px;
  border-bottom: 3px solid #424242;
  color: #c8c8c8;
}
.dockgroup .plain { height: 36px; }

/* properties panel */
.panel { background: #535353; border-right: 1px solid #424242; }
.ptabs { display: flex; height: 33px; background: #424242; }
.ptabs button { padding: 0 12px; border-right: 1px solid #3b3b3b; color: #b0b0b0; }
.ptabs .on { padding: 0 10px 0 12px; border: 0; background: #535353; color: #f0f0f0; font-weight: 600; }
.pbody { padding-right: 14px; }
.kind, .line { display: flex; align-items: center; padding-left: 12px; border-bottom: 1px solid #4b4b4b; }
.kind { height: 43px; padding-top: 3px; font-weight: 500; color: #c6c6c6; }
.line { height: 45px; gap: 14px; color: #c8c8c8; font-weight: 500; }
.line span { width: 62px; }
.convert { height: 53px; }
.block { padding: 13px 7px 3px 12px; border-bottom: 1px solid #4b4b4b; }
.dots { width: 24px; height: 18px; margin-left: auto; color: #dcdcdc; }

.xform {
  display: grid;
  grid-template-columns: 32px 25px 71px 41px 71px 44px;
  grid-template-rows: repeat(3, 26px);
  row-gap: 7px;
  align-items: center;
  margin: 6px 0 6px;
}
.xform label { text-align: right; padding-right: 8px; color: #c6c6c6; }
.xform input, .combo {
  height: 26px;
  border: 1px solid #5e5e5e;
  border-radius: 3px;
  background: #424242;
  color: #e0e0e0;
}
.xform input { width: 71px; padding: 0 5px; }
.xform input:disabled, .combo.off { background: #595959; border-color: #595959; color: #707070; }
.combo.off select { color: #707070; opacity: 1; }
.xform .editing {
  border: 2px solid #6aa9ea;
  background: linear-gradient(#0078d7, #0078d7) 2px 2px / 50px 18px no-repeat, #fff;
  color: #a8d4ff;
  padding: 0 4px;
}
.ref { grid-column: 1; grid-row: 1 / 3; margin-left: -1px; }
.lock { grid-column: 6; grid-row: 1 / 3; width: 30px; height: 30px; margin-left: 12px; color: #c8c8c8; }
.lock.on { background: #2e2e2e; }
.xform > label:nth-of-type(1), .xform > label:nth-of-type(3) { grid-column: 2; }
.xform > label:nth-of-type(2), .xform > label:nth-of-type(4) { grid-column: 4; }
.ang { grid-column: 1 / 3; grid-row: 3; justify-self: end; margin-right: 6px; color: #c8c8c8; }
.angle { grid-column: 3; grid-row: 3; }
.combo.off > svg { color: #707070; }
.flips { grid-column: 4 / 7; grid-row: 3; display: flex; align-items: center; gap: 14px; padding-left: 50px; color: #c8c8c8; }

.combo { display: flex; align-items: center; }
.combo > svg { width: 24px; height: 12px; }
.combo input, .combo select { flex: 1; width: 10px; height: 24px; padding: 0 4px; border-right: 1px solid #5e5e5e; }
.combo.off select { border: 0; }
.spin { width: 22px; height: 24px; display: grid; justify-content: center; border-right: 1px solid #5e5e5e; }

.looks {
  display: grid;
  grid-template-columns: 38px 62px 90px;
  grid-auto-rows: 26px;
  row-gap: 11px;
  align-items: center;
  margin: 13px 0 17px;
}
.looks .chip { grid-column: 1; }
.looks .combo { grid-column: 3; }
.looks a { justify-self: start; line-height: 16px; color: #ececec; font-weight: 500; border-bottom: 2px dotted #c4c4c4; }
.chip { width: 23px; height: 23px; border: 1px solid #3c3c3c; }
.chip.fill { background: #fff; }
.chip.stroke { border: 1px solid #b4b4b4; background: linear-gradient(#535353, #535353) center / 9px 9px no-repeat, linear-gradient(#b4b4b4, #b4b4b4) center / 11px 11px no-repeat, #000; }
.chip.opacity { border: 2px solid #a8a8a8; background: repeating-conic-gradient(#535353 0 25%, #747474 0 50%) center / 10px 10px; }
.fx { height: 24px; margin-left: 8px; font-size: 16px; font-style: italic; }
.fx + .dots { margin-top: 10px; }

.aligns { display: flex; justify-content: space-between; padding: 0 22px 0 4px; margin: 15px 0 13px; color: #c8c8c8; }

.quick { padding: 19px 2px 0 12px; }
.actions { display: grid; gap: 13px; margin-top: 11px; }
.actions button { height: 27px; border: 1px solid #6e6e6e; border-radius: 3px; color: #ececec; font-weight: 500; }
.pair { display: grid; grid-template-columns: 1fr 1fr; gap: 13px; }
.split { display: grid; grid-template-columns: 1fr 28px; }
.split button:first-child { border-radius: 3px 0 0 3px; }
.split button:last-child { display: grid; place-items: center; border-left: 0; border-radius: 0 3px 3px 0; background: #484848; }

/* artwork */
.pattern { fill: none; stroke: #646464; }
.pattern text { stroke: none; fill: #5c5c5c; }
.ext { stroke: #757575; }
.dimline { stroke: #757575; marker-mid: url(#tick); }
.dim { font: 22px/1 "Liberation Serif", serif; text-anchor: middle; }
.pattern .mark { font: 128px/1 "Open Sans", sans-serif; fill: #848484; }
.tip { font: 12px/1 "Noto Sans", sans-serif; text-anchor: middle; fill: #222; }
.handles { fill: #fff; stroke: #5b83e6; }
.size { font: 700 50px/1 "Noto Sans CJK SC", sans-serif; text-anchor: end; fill: #000; }
.mini { fill: none; stroke: #8a8a86; }
.mini .ticks { stroke: #b4b4b0; marker-mid: url(#dot); marker-start: url(#dot); marker-end: url(#dot); }
.mini .knots { stroke: #555; stroke-width: 3; }
.mini text { stroke: none; fill: #777; }
.tiny { font: 5px/1 "Liberation Serif", serif; text-anchor: middle; }
.mini .ghost { font: 28px/1 "Open Sans", sans-serif; fill: #fafafa; }
.small { fill: none; stroke: #747470; }
.pieces { fill: #fff; }
```
